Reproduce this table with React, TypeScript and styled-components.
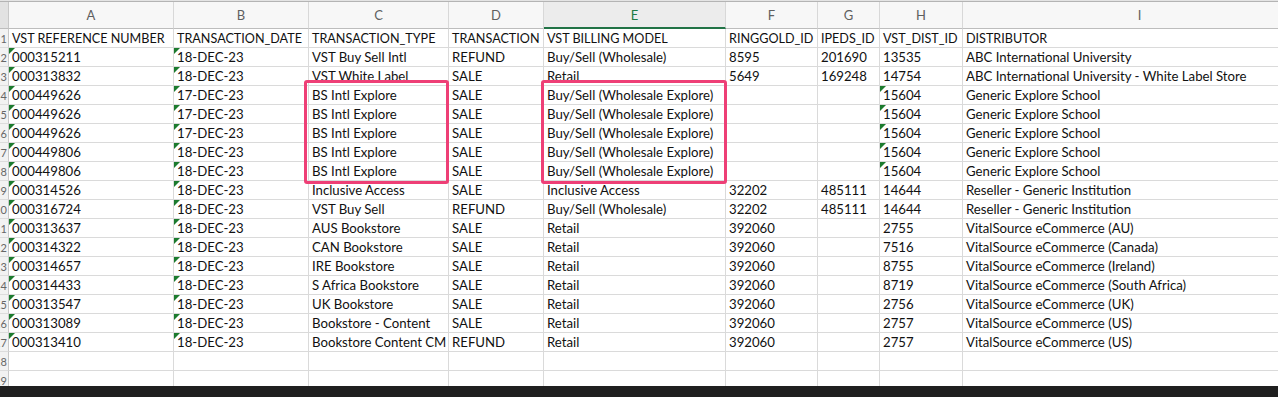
import React from "react";
import styled, { createGlobalStyle, css } from "styled-components";

const GlobalStyle = createGlobalStyle`
  html, body {
    margin: 0;
    padding: 0;
    background: #ffffff;
  }
  body {
    font-family: Lato, "Noto Sans", sans-serif;
  }
`;

const COLUMNS = ["A", "B", "C", "D", "E", "F", "G", "H", "I"];
const WIDTHS = [165, 135, 140, 95, 182, 92, 62, 83, 354];
const SELECTED_COL = 4;

type Row = string[];

const explore = (id: string, date: string): Row => [
  id,
  date,
  "BS Intl Explore",
  "SALE",
  "Buy/Sell (Wholesale Explore)",
  "",
  "",
  "15604",
  "Generic Explore School",
];

const store = (id: string, type: string, dist: string, name: string, tx = "SALE"): Row => [
  id,
  "18-DEC-23",
  type,
  tx,
  "Retail",
  "392060",
  "",
  dist,
  name,
];

const rows: Row[] = [
  ["VST REFERENCE NUMBER", "TRANSACTION_DATE", "TRANSACTION_TYPE", "TRANSACTION", "VST BILLING MODEL", "RINGGOLD_ID", "IPEDS_ID", "VST_DIST_ID", "DISTRIBUTOR"],
  ["000315211", "18-DEC-23", "VST Buy Sell Intl", "REFUND", "Buy/Sell (Wholesale)", "8595", "201690", "13535", "ABC International University"],
  ["000313832", "18-DEC-23", "VST White Label", "SALE", "Retail", "5649", "169248", "14754", "ABC International University - White Label Store"],
  explore("000449626", "17-DEC-23"),
  explore("000449626", "17-DEC-23"),
  explore("000449626", "17-DEC-23"),
  explore("000449806", "18-DEC-23"),
  explore("000449806", "18-DEC-23"),
  ["000314526", "18-DEC-23", "Inclusive Access", "SALE", "Inclusive Access", "32202", "485111", "14644", "Reseller - Generic Institution"],
  ["000316724", "18-DEC-23", "VST Buy Sell", "REFUND", "Buy/Sell (Wholesale)", "32202", "485111", "14644", "Reseller - Generic Institution"],
  store("000313637", "AUS Bookstore", "2755", "VitalSource eCommerce (AU)"),
  store("000314322", "CAN Bookstore", "7516", "VitalSource eCommerce (Canada)"),
  store("000314657", "IRE Bookstore", "8755", "VitalSource eCommerce (Ireland)"),
  store("000314433", "S Africa Bookstore", "8719", "VitalSource eCommerce (South Africa)"),
  store("000313547", "UK Bookstore", "2756", "VitalSource eCommerce (UK)"),
  store("000313089", "Bookstore - Content", "2757", "VitalSource eCommerce (US)"),
  store("000313410", "Bookstore Content CM", "2757", "VitalSource eCommerce (US)", "REFUND"),
  Array(9).fill(""),
  Array(9).fill(""),
];

// cells that show Excel's "number stored as text" marker
const hasFlag = (r: number, c: number, value: string) =>
  r > 0 && value !== "" && (c === 0 || c === 1 || (c === 7 && r >= 3 && r <= 7));

const Page = styled.div`
  width: 1278px;
  height: 397px;
  display: flex;
  flex-direction: column;
  overflow: hidden;
  background: #fff;
`;

const TopEdge = styled.div`
  height: 1px;
  background: #e4e4e4;
  border-bottom: 1px solid #b4b4b4;
  flex-shrink: 0;
`;

const Sheet = styled.div`
  position: relative;
  flex: 1;
  overflow: hidden;
`;

const Grid = styled.div`
  display: grid;
  grid-template-columns: 31px ${WIDTHS.map((w) => `${w}px`).join(" ")};
  grid-auto-rows: 19px;
  grid-template-rows: 27px;
  margin-left: -22px;
  width: max-content;
`;

const Corner = styled.div`
  background: #e2e2e2;
  border-right: 1px solid #c8c8c8;
  border-bottom: 1px solid #bdbdbd;
`;

const ColHead = styled.div<{ $selected?: boolean }>`
  box-sizing: border-box;
  display: flex;
  align-items: center;
  justify-content: center;
  font-size: 13px;
  color: #5f5f5f;
  background: #f7f7f7;
  border-right: 1px solid #d8d8d8;
  border-bottom: 1px solid #bdbdbd;
  ${(p) =>
    p.$selected &&
    css`
      color: #1f7a45;
      background: #ececec;
      border-bottom: 2px solid #217346;
    `}
`;

const RowHead = styled.div`
  box-sizing: border-box;
  display: flex;
  align-items: center;
  justify-content: flex-end;
  padding-right: 1px;
  font-size: 11px;
  color: #666;
  background: #f2f2f2;
  border-right: 1px solid #c8c8c8;
  border-bottom: 1px solid #dcdcdc;
`;

const Cell = styled.div<{ $flag?: boolean; $caps?: boolean }>`
  position: relative;
  box-sizing: border-box;
  padding: 0 3px;
  display: flex;
  align-items: center;
  font-size: ${(p) => (p.$caps ? "12.6px" : "13.2px")};
  color: #111;
  white-space: nowrap;
  overflow: hidden;
  border-right: 1px solid #dadada;
  border-bottom: 1px solid #dadada;
  ${(p) =>
    p.$flag &&
    css`
      &::before {
        content: "";
        position: absolute;
        left: 0;
        top: 0;
        border-style: solid;
        border-width: 6px 6px 0 0;
        border-color: #1c7b2e transparent transparent transparent;
      }
    `}
`;

const Highlight = styled.div<{ $left: number; $width: number }>`
  position: absolute;
  top: 78px;
  left: ${(p) => p.$left}px;
  width: ${(p) => p.$width}px;
  height: 104px;
  box-sizing: border-box;
  border: 3px solid #ee3f76;
  border-radius: 3px;
  pointer-events: none;
`;

const BottomBar = styled.div`
  height: 11px;
  flex-shrink: 0;
  background: #1f1f1f;
`;

export default function App() {
  return (
    <>
      <GlobalStyle />
      <Page>
        <TopEdge />
        <Sheet>
          <Grid>
            <Corner />
            {COLUMNS.map((c, i) => (
              <ColHead key={c} $selected={i === SELECTED_COL}>
                {c}
              </ColHead>
            ))}
            {rows.map((row, r) => (
              <React.Fragment key={r}>
                <RowHead>{r + 1}</RowHead>
                {row.map((value, c) => (
                  <Cell key={c} $flag={hasFlag(r, c, value)} $caps={r === 0}>
                    {value}
                  </Cell>
                ))}
              </React.Fragment>
            ))}
          </Grid>
          <Highlight $left={304} $width={145} />
          <Highlight $left={541} $width={186} />
        </Sheet>
        <BottomBar />
      </Page>
    </>
  );
}
